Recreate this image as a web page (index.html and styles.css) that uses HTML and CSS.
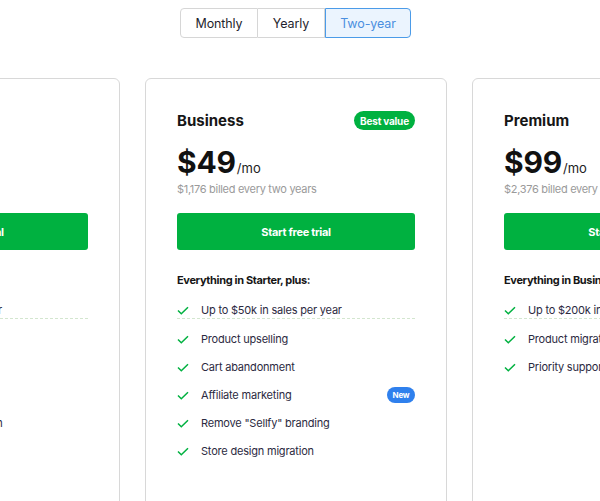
FILE: index.html
```html
<!DOCTYPE html>
<html>
<head>
<meta charset="utf-8">
<link rel="stylesheet" href="styles.css">
</head>
<body>
<div class="toggle-wrap">
  <div class="toggle">
    <button class="opt">Monthly</button>
    <button class="opt">Yearly</button>
    <button class="opt active">Two-year</button>
  </div>
</div>
<div class="cards">
  <div class="card">
    <div class="head"><span class="title">Starter</span></div>
    <div class="price"><span class="amount">$19</span><span class="per">/mo</span></div>
    <div class="billed">$456 billed every two years</div>
    <button class="cta">Start free trial</button>
    <div class="inc">Starter features:</div>
    <ul class="features">
      <li class="limit"><svg class="chk" viewBox="0 0 12 9"><path d="M1 4.5 L4.3 7.8 L11 1.2"/></svg>Up to $10k in sales a year</li>
      <li><svg class="chk" viewBox="0 0 12 9"><path d="M1 4.5 L4.3 7.8 L11 1.2"/></svg>Unlimited products</li>
      <li><svg class="chk" viewBox="0 0 12 9"><path d="M1 4.5 L4.3 7.8 L11 1.2"/></svg>Custom domain</li>
      <li><svg class="chk" viewBox="0 0 12 9"><path d="M1 4.5 L4.3 7.8 L11 1.2"/></svg>Email marketing</li>
      <li><svg class="chk" viewBox="0 0 12 9"><path d="M1 4.5 L4.3 7.8 L11 1.2"/></svg>Discount code integration</li>
    </ul>
  </div>
  <div class="card">
    <div class="head"><span class="title">Business</span><span class="badge green">Best value</span></div>
    <div class="price"><span class="amount">$49</span><span class="per">/mo</span></div>
    <div class="billed">$1,176 billed every two years</div>
    <button class="cta">Start free trial</button>
    <div class="inc">Everything in Starter, plus:</div>
    <ul class="features">
      <li class="limit"><svg class="chk" viewBox="0 0 12 9"><path d="M1 4.5 L4.3 7.8 L11 1.2"/></svg>Up to $50k in sales per year</li>
      <li><svg class="chk" viewBox="0 0 12 9"><path d="M1 4.5 L4.3 7.8 L11 1.2"/></svg>Product upselling</li>
      <li><svg class="chk" viewBox="0 0 12 9"><path d="M1 4.5 L4.3 7.8 L11 1.2"/></svg>Cart abandonment</li>
      <li><svg class="chk" viewBox="0 0 12 9"><path d="M1 4.5 L4.3 7.8 L11 1.2"/></svg>Affiliate marketing<span class="badge blue">New</span></li>
      <li><svg class="chk" viewBox="0 0 12 9"><path d="M1 4.5 L4.3 7.8 L11 1.2"/></svg>Remove "Sellfy" branding</li>
      <li><svg class="chk" viewBox="0 0 12 9"><path d="M1 4.5 L4.3 7.8 L11 1.2"/></svg>Store design migration</li>
    </ul>
  </div>
  <div class="card">
    <div class="head"><span class="title">Premium</span></div>
    <div class="price"><span class="amount">$99</span><span class="per">/mo</span></div>
    <div class="billed">$2,376 billed every two years</div>
    <button class="cta">Start free trial</button>
    <div class="inc">Everything in Business, plus:</div>
    <ul class="features">
      <li class="limit"><svg class="chk" viewBox="0 0 12 9"><path d="M1 4.5 L4.3 7.8 L11 1.2"/></svg>Up to $200k in sales per year</li>
      <li><svg class="chk" viewBox="0 0 12 9"><path d="M1 4.5 L4.3 7.8 L11 1.2"/></svg>Product migration</li>
      <li><svg class="chk" viewBox="0 0 12 9"><path d="M1 4.5 L4.3 7.8 L11 1.2"/></svg>Priority support</li>
    </ul>
  </div>
</div>
</body>
</html>
```
FILE: styles.css
```css
* { box-sizing: border-box; }
html, body { margin: 0; padding: 0; background: #fff; }
body {
  font-family: Inter, "Noto Sans", sans-serif;
  color: #1b1b1b;
  width: 600px;
  height: 501px;
  overflow: hidden;
}
.toggle-wrap {
  padding-top: 8px;
  padding-left: 180px;
  display: flex;
}
.toggle {
  display: flex;
  height: 30px;
}
.opt {
  font-family: inherit;
  font-size: 12.5px;
  letter-spacing: -0.1px;
  white-space: nowrap;
  color: #1f1f2e;
  background: #fff;
  border: 1px solid #d6d6d6;
  margin: 0;
  padding: 0;
  height: 30px;
  cursor: pointer;
}
.opt + .opt { border-left: none; }
.opt:first-child { border-radius: 4px 0 0 4px; width: 78px; }
.opt:nth-child(2) { width: 67px; }
.opt.active {
  width: 86px;
  background: #ebf4fe;
  border: 1px solid #4b9be8;
  color: #4b8fe0;
  border-radius: 0 4px 4px 0;
}
.cards {
  display: flex;
  gap: 25px;
  margin-top: 40px;
  margin-left: -182px;
}
.card {
  flex: 0 0 302px;
  width: 302px;
  height: 460px;
  border: 1px solid #d8d8d8;
  border-radius: 6px;
  padding: 32px 31px 0;
}
.head {
  display: flex;
  justify-content: space-between;
  align-items: center;
  height: 19px;
}
.title {
  font-size: 15px;
  font-weight: 700;
  color: #161616;
}
.badge {
  color: #fff;
  font-weight: 700;
  border-radius: 10px;
  display: inline-flex;
  align-items: center;
  justify-content: center;
}
.badge.green {
  background: #00b140;
  font-size: 10px;
  height: 19px;
  width: 61px;
  letter-spacing: -0.2px;
}
.badge.blue {
  background: #2f80ed;
  font-size: 8px;
  height: 16px;
  width: 28px;
  margin-left: auto;
}
.price {
  margin-top: 16px;
  height: 32px;
  display: flex;
  align-items: baseline;
}
.amount {
  font-size: 30px;
  font-weight: 700;
  line-height: 32px;
  letter-spacing: -0.2px;
  color: #111;
}
.per {
  font-size: 13px;
  color: #222;
  margin-left: 1px;
}
.billed {
  margin-top: 4px;
  font-size: 11px;
  line-height: 14px;
  letter-spacing: -0.3px;
  color: #9a9a9a;
}
.cta {
  display: block;
  width: 100%;
  height: 37px;
  margin-top: 17px;
  border: none;
  border-radius: 3px;
  background: #00b140;
  color: #fff;
  font-family: inherit;
  font-size: 11px;
  letter-spacing: -0.3px;
  font-weight: 700;
}
.inc {
  margin-top: 22px;
  font-size: 11px;
  line-height: 16px;
  letter-spacing: -0.35px;
  font-weight: 700;
  color: #161616;
}
.features {
  list-style: none;
  margin: 14px 0 0;
  padding: 0;
}
.features li {
  display: flex;
  align-items: center;
  font-size: 11px;
  line-height: 16px;
  letter-spacing: -0.2px;
  color: #2c2a3f;
  margin-bottom: 12px;
}
.features li.limit {
  border-bottom: 1px dashed #d3e6cf;
}
.chk {
  width: 12px;
  height: 9px;
  margin-right: 12px;
  fill: none;
  stroke: #00b140;
  stroke-width: 1.5;
  flex: 0 0 12px;
}
```
